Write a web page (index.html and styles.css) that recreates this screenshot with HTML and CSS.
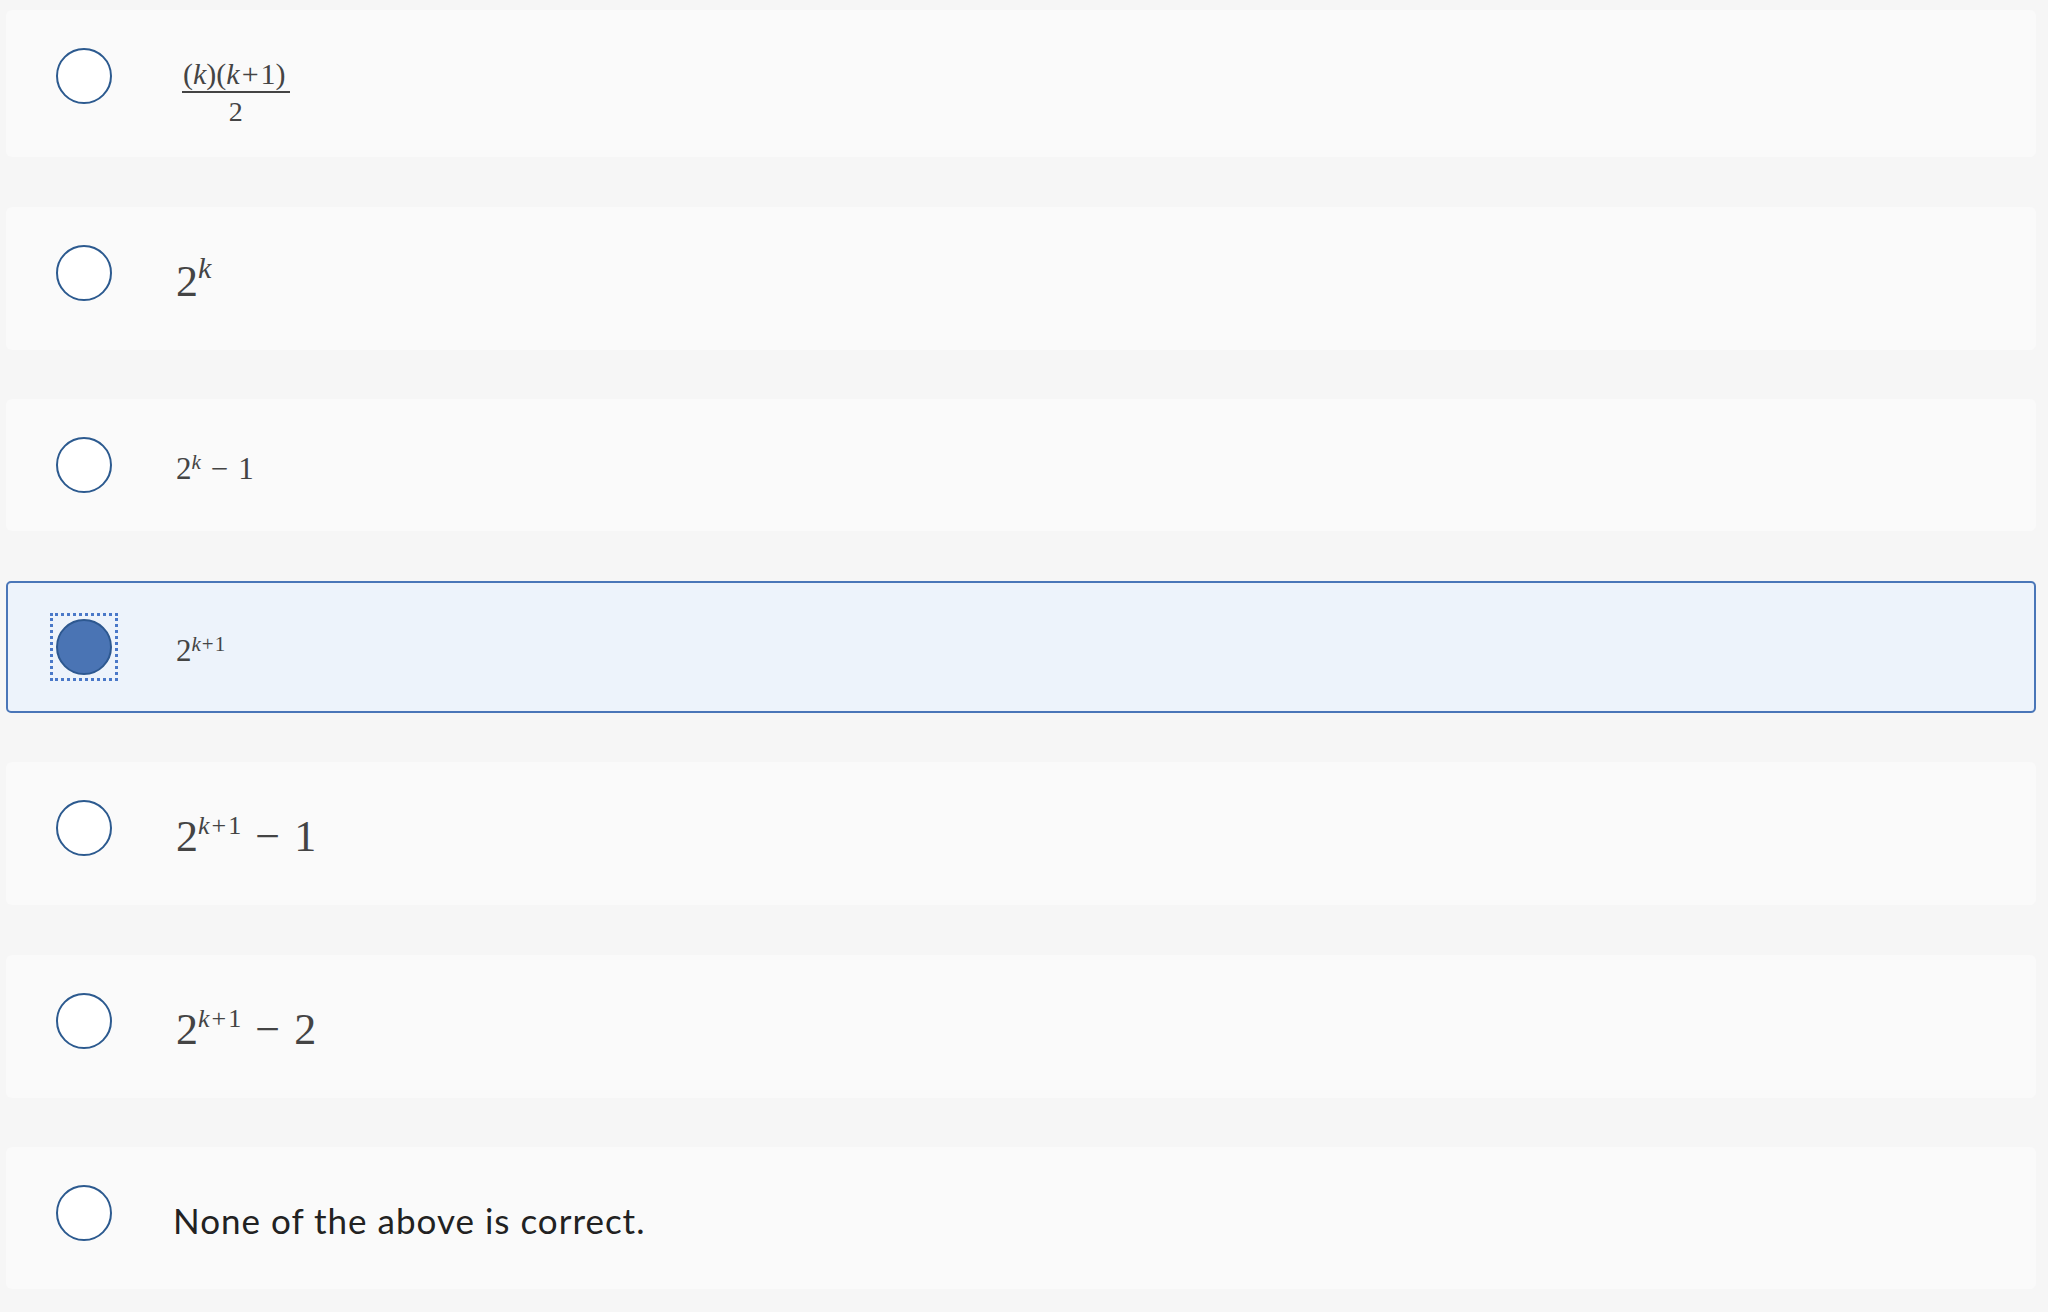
FILE: index.html
```html
<!DOCTYPE html>
<html lang="en">
<head>
  <meta charset="UTF-8" />
  <meta name="viewport" content="width=device-width, initial-scale=1.0" />
  <title>Question</title>
  <link rel="stylesheet" href="styles.css">
</head>
<body>
  <div class="choices">
    <label class="option">
      <span class="radio-wrap"><input type="radio" name="answer" class="radio"></span>
      <span class="answer math">
        <span class="frac">
          <span class="num">(<i>k</i>)(<i>k</i><span class="pl">+</span>1)</span>
          <span class="den">2</span>
        </span>
      </span>
    </label>

    <label class="option">
      <span class="radio-wrap"><input type="radio" name="answer" class="radio"></span>
      <span class="answer math big">2<sup class="sup-k"><i>k</i></sup></span>
    </label>

    <label class="option">
      <span class="radio-wrap"><input type="radio" name="answer" class="radio"></span>
      <span class="answer math small">2<sup><i>k</i></sup><span class="op">−</span>1</span>
    </label>

    <label class="option selected">
      <span class="radio-wrap"><input type="radio" name="answer" class="radio" checked></span>
      <span class="answer math small">2<sup><i>k</i><span class="pl">+</span>1</sup></span>
    </label>

    <label class="option">
      <span class="radio-wrap"><input type="radio" name="answer" class="radio"></span>
      <span class="answer math big">2<sup><i>k</i><span class="pl">+</span>1</sup><span class="op">−</span>1</span>
    </label>

    <label class="option">
      <span class="radio-wrap"><input type="radio" name="answer" class="radio"></span>
      <span class="answer math big">2<sup><i>k</i><span class="pl">+</span>1</sup><span class="op">−</span>2</span>
    </label>

    <label class="option">
      <span class="radio-wrap"><input type="radio" name="answer" class="radio"></span>
      <span class="answer plain">None of the above is correct.</span>
    </label>
  </div>
</body>
</html>
```

FILE: styles.css
```css
body {
  margin: 0;
  background: #f6f6f6;
}

.choices {
  display: flex;
  flex-direction: column;
  gap: 49.5px;
  padding: 10px 12px 20px 6px;
}

.option {
  display: flex;
  align-items: flex-start;
  gap: 64px;
  padding: 36px 48px;
  background: #fafafa;
  border: 2px solid transparent;
  border-radius: 6px;
  cursor: pointer;
}

.option.selected {
  background: #edf3fb;
  border-color: #4a76b8;
  border-radius: 5px;
}

.radio-wrap {
  display: block;
  width: 56px;
  height: 56px;
  flex-shrink: 0;
}

.selected .radio-wrap {
  outline: 3px dotted #4a78c8;
  outline-offset: 3px;
}

.radio {
  appearance: none;
  display: block;
  margin: 0;
  width: 56px;
  height: 56px;
  border: 2px solid #2c5a8f;
  border-radius: 50%;
  background: #fff;
  cursor: pointer;
}

.radio:checked {
  background: #4a74b4;
  border-color: #2d5890;
}

.radio:focus {
  outline: none;
}

/* math answers */
.math {
  font-family: "Liberation Serif", "Times New Roman", serif;
  color: #444;
}

.math i {
  font-style: italic;
}

.math sup {
  line-height: 0;
}

.pl {
  margin: 0 1px;
}

.op {
  margin: 0 0.32em;
}

.big {
  font-size: 44px;
  line-height: 60px;
  padding-top: 7px;
}

.big sup {
  font-size: 26px;
  vertical-align: 17px;
}

.big sup .pl {
  margin: 0 2px;
}

.big .sup-k {
  font-size: 30px;
  vertical-align: 18px;
}

.small {
  font-size: 31px;
  line-height: 39px;
  padding-top: 12px;
}

.small sup {
  font-size: 21px;
  vertical-align: 10px;
}

.frac {
  display: inline-flex;
  flex-direction: column;
  align-items: center;
  margin-left: 6px;
}

.num {
  font-size: 30px;
  line-height: 34px;
  padding: 9px 4px 0 1px;
  border-bottom: 2px solid #444;
}

.num .pl {
  margin: 0 2px;
}

.den {
  font-size: 28px;
  line-height: 14px;
  padding-top: 12px;
}

.plain {
  font-family: Lato, "Liberation Sans", sans-serif;
  font-size: 35px;
  line-height: 61px;
  padding-top: 5px;
  letter-spacing: 1px;
  color: #222;
  margin-left: -3px;
}
```
